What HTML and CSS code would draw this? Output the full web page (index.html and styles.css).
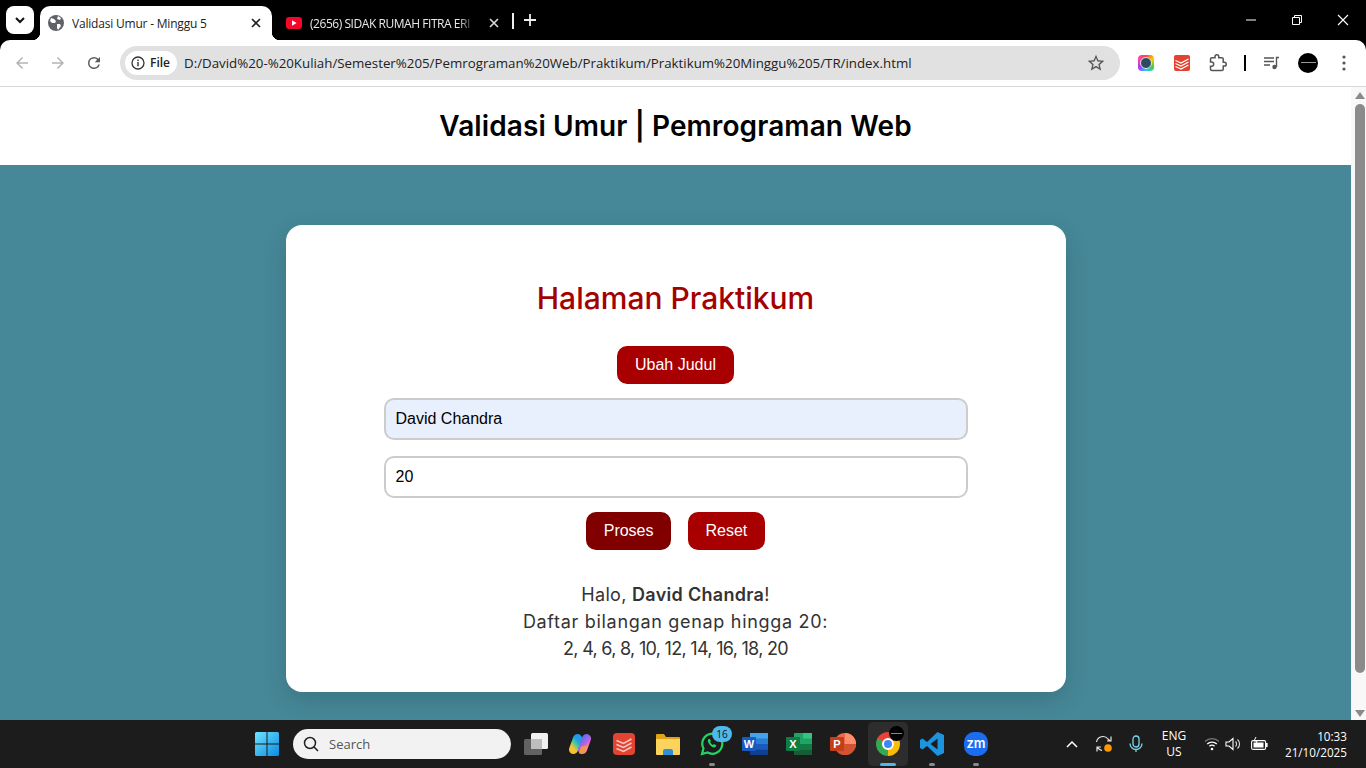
FILE: index.html
```html
<!DOCTYPE html>
<html>
<head>
    <title>Validasi Umur - Minggu 5</title>
    <link rel="stylesheet" href="styles.css">
</head>
<body>
    <div class="tabstrip">
        <div class="tab-search"><svg width="12" height="12" viewBox="0 0 12 12"><path d="M2 4l4 4 4-4" fill="none" stroke="#111" stroke-width="2"/></svg></div>
        <div class="tab tab-active">
            <svg class="favicon" width="16" height="16" viewBox="0 0 16 16"><circle cx="8" cy="8" r="8" fill="#5f6368"/><path d="M3 3l3 1 2 2-1 2-3 0-2-2zM9 9l3 0 1 2-3 4-1-2zM10 1l3 2-1 2-3-1z" fill="#fff"/></svg>
            <span class="tab-title">Validasi Umur - Minggu 5</span>
            <svg class="tab-close" width="10" height="10" viewBox="0 0 10 10"><path d="M1 1l8 8M9 1l-8 8" stroke="#222" stroke-width="1.6"/></svg>
        </div>
        <div class="tab tab-other">
            <svg class="favicon" width="16" height="12" viewBox="0 0 16 12"><rect width="16" height="12" rx="3" fill="#f5062a"/><path d="M6 3.2l4.6 2.8L6 8.800z" fill="#fff"/></svg>
            <span class="tab-title tab-fade">(2656) SIDAK RUMAH FITRA ERI</span>
            <svg class="tab-close" width="10" height="10" viewBox="0 0 10 10"><path d="M1 1l8 8M9 1l-8 8" stroke="#ddd" stroke-width="1.6"/></svg>
        </div>
        <div class="tab-sep"></div>
        <svg class="tab-new" width="12" height="12" viewBox="0 0 12 12"><path d="M6 0v12M0 6h12" stroke="#eee" stroke-width="1.8"/></svg>
        <div class="win-controls">
            <svg width="46" height="40" viewBox="0 0 46 40"><path d="M18 20h10" stroke="#fff"/></svg>
            <svg width="46" height="40" viewBox="0 0 46 40"><path d="M18.500 17.500h7v7h-7zM20.500 17v-1.500h7v7H26" fill="none" stroke="#fff"/></svg>
            <svg width="46" height="40" viewBox="0 0 46 40"><path d="M18 15l10 10M28 15L18 25" stroke="#fff" stroke-width="1.100"/></svg>
        </div>
    </div>

    <div class="toolbar">
        <svg class="nav-icon" width="18" height="18" viewBox="0 0 24 24"><path d="M20 11H7.800l5.600-5.600L12 4l-8 8 8 8 1.400-1.400L7.800 13H20z" fill="#b4b4b4"/></svg>
        <svg class="nav-icon" width="18" height="18" viewBox="0 0 24 24"><path d="M4 11h12.200l-5.600-5.600L12 4l8 8-8 8-1.400-1.400 5.600-5.600H4z" fill="#b4b4b4"/></svg>
        <svg class="nav-icon" width="18" height="18" viewBox="0 0 24 24"><path d="M17.650 6.350A7.950 7.950 0 0 0 12 4a8 8 0 1 0 7.750 10h-2.080A6 6 0 1 1 12 6c1.660 0 3.140.69 4.220 1.780L13 11h7V4z" fill="#5a5a5a"/></svg>
        <div class="omnibox">
            <div class="file-chip">
                <svg width="14" height="14" viewBox="0 0 14 14"><circle cx="7" cy="7" r="6" fill="none" stroke="#333" stroke-width="1.300"/><path d="M7 6v4.200M7 3.600v1.300" stroke="#333" stroke-width="1.400"/></svg>
                <span>File</span>
            </div>
            <span class="url">D:/David%20-%20Kuliah/Semester%205/Pemrograman%20Web/Praktikum/Praktikum%20Minggu%205/TR/index.html</span>
            <svg class="star" width="20" height="20" viewBox="0 0 24 24"><path d="M22 9.240l-7.190-.62L12 2 9.190 8.630 2 9.240l5.460 4.730L5.820 21 12 17.270 18.180 21l-1.630-7.030L22 9.240zM12 15.400l-3.760 2.270 1-4.280-3.320-2.880 4.380-.38L12 6.100l1.710 4.040 4.380.38-3.320 2.880 1 4.280L12 15.400z" fill="#555"/></svg>
        </div>
        <div class="ext-icons">
            <div class="ext"><div class="ext-lens"></div></div>
            <div class="ext"><svg width="16" height="16" viewBox="0 0 16 16"><rect width="16" height="16" rx="2" fill="#e44332"/><path d="M1.500 5.500l5.500 2.500 7.500-4M1.500 8.500l5.500 2.500 7.500-4M1.500 11.500l5.500 2.500 7.500-4" fill="none" stroke="#fff" stroke-width="1.200"/></svg></div>
            <div class="ext"><svg width="18" height="18" viewBox="0 0 24 24"><path d="M20.500 11H19V7c0-1.100-.9-2-2-2h-4V3.500C13 2.120 11.880 1 10.500 1S8 2.120 8 3.500V5H4c-1.100 0-1.990.9-1.990 2v3.800H3.500c1.490 0 2.700 1.210 2.700 2.700s-1.210 2.700-2.700 2.700H2V20c0 1.100.9 2 2 2h13c1.100 0 2-.9 2-2v-4h1.500c1.380 0 2.500-1.120 2.500-2.500S21.880 11 20.500 11z" fill="none" stroke="#555" stroke-width="2"/></svg></div>
            <div class="toolbar-sep"></div>
            <div class="ext"><svg width="16" height="14" viewBox="0 0 16 14"><path d="M0 2h10M0 5.500h10M0 9h6" stroke="#555" stroke-width="1.400"/><path d="M12.500 11V1.500H15" fill="none" stroke="#555" stroke-width="1.400"/><circle cx="10.500" cy="11" r="2.200" fill="#555"/></svg></div>
            <div class="ext"><div class="avatar"></div></div>
            <div class="ext"><svg width="4" height="16" viewBox="0 0 4 16"><circle cx="2" cy="2" r="1.600" fill="#555"/><circle cx="2" cy="8" r="1.600" fill="#555"/><circle cx="2" cy="14" r="1.600" fill="#555"/></svg></div>
        </div>
    </div>

    <div class="viewport">
        <div class="page">
            <header class="page-header">
                <h1>Validasi Umur | Pemrograman Web</h1>
            </header>
            <main class="page-main">
                <section class="card">
                    <h2>Halaman Praktikum</h2>
                    <button class="btn" type="button">Ubah Judul</button>
                    <input class="field field-filled" type="text" value="David Chandra">
                    <input class="field" type="text" value="20">
                    <div class="btn-row">
                        <button class="btn btn-hover" type="button">Proses</button>
                        <button class="btn" type="button">Reset</button>
                    </div>
                    <div class="result">
                        <div class="line-greet">Halo, <b>David Chandra</b>!</div>
                        <div class="line-label">Daftar bilangan genap hingga 20:</div>
                        <div class="line-nums">2, 4, 6, 8, 10, 12, 14, 16, 18, 20</div>
                    </div>
                </section>
            </main>
        </div>
        <div class="scrollbar">
            <svg width="10" height="7" viewBox="0 0 10 7"><path d="M5 0l5 7H0z" fill="#8a8a8a"/></svg>
            <div class="scroll-thumb"></div>
            <svg width="10" height="7" viewBox="0 0 10 7"><path d="M5 7l5-7H0z" fill="#8a8a8a"/></svg>
        </div>
    </div>

    <footer class="taskbar">
        <div class="task-item">
            <svg width="24" height="24" viewBox="0 0 24 24">
                <defs><linearGradient id="winblue" x1="0" y1="0" x2="1" y2="1"><stop offset="0" stop-color="#6fe3ff"/><stop offset="1" stop-color="#0a8be0"/></linearGradient></defs>
                <path d="M0 1.500a1.500 1.500 0 0 1 1.500-1.500H11.500v11.500H0zM12.500 0H22.500A1.500 1.500 0 0 1 24 1.500V11.500H12.500zM0 12.500H11.500V24H1.500A1.500 1.500 0 0 1 0 22.500zM12.500 12.500H24V22.500A1.500 1.500 0 0 1 22.500 24H12.500z" fill="url(#winblue)"/>
            </svg>
        </div>
        <div class="search-box">
            <svg width="16" height="16" viewBox="0 0 16 16"><circle cx="7" cy="7" r="5.500" fill="none" stroke="#222" stroke-width="1.500"/><path d="M11 11l4 4" stroke="#222" stroke-width="1.600"/></svg>
            <span>Search</span>
        </div>
        <div class="task-item">
            <svg width="24" height="24" viewBox="0 0 24 24"><rect x="7" y="1" width="17" height="16" rx="1.500" fill="#f0f0f0"/><rect x="0" y="7" width="18" height="16" rx="1.500" fill="#6a6a6a" fill-opacity=".9"/><rect x="7" y="7" width="11" height="10" fill="#bdbdbd"/></svg>
        </div>
        <div class="task-item">
            <svg width="24" height="24" viewBox="0 0 24 24">
                <defs>
                    <linearGradient id="copleft" x1="0.700" y1="0" x2="0.300" y2="1"><stop offset="0" stop-color="#1f9be8"/><stop offset=".55" stop-color="#4fd08a"/><stop offset="1" stop-color="#f6c233"/></linearGradient>
                    <linearGradient id="copright" x1="0.300" y1="0" x2="0.700" y2="1"><stop offset="0" stop-color="#6a6ff0"/><stop offset=".55" stop-color="#c45fe0"/><stop offset="1" stop-color="#f58ab0"/></linearGradient>
                </defs>
                <path d="M9.500 6.500L5.500 17.500" fill="none" stroke="url(#copleft)" stroke-width="9" stroke-linecap="round"/>
                <path d="M18.500 6.500L14.500 17.500" fill="none" stroke="url(#copright)" stroke-width="9" stroke-linecap="round"/>
                <path d="M11 21.500h3c2 0 3-1.500 3.500-3L19 14l-6 .5z" fill="#f59a3c"/>
            </svg>
        </div>
        <div class="task-item">
            <svg width="22" height="22" viewBox="0 0 22 22"><rect width="22" height="22" rx="4" fill="#e44332"/><path d="M3.500 7.500l7 3 8-4.500M3.500 11.500l7 3 8-4.500M3.500 15.500l7 3 8-4.500" fill="none" stroke="#f8c9c4" stroke-width="1.500"/></svg>
        </div>
        <div class="task-item">
            <svg width="24" height="22" viewBox="0 0 24 22"><path d="M0 2a1 1 0 0 1 1-1h7l2 3h13a1 1 0 0 1 1 1v3H0z" fill="#e0a317"/><path d="M0 6h24v15a1 1 0 0 1-1 1H1a1 1 0 0 1-1-1z" fill="#fcd45b"/><path d="M7 22v-4a2 2 0 0 1 2-2h6a2 2 0 0 1 2 2v4z" fill="#2d8fd8"/></svg>
        </div>
        <div class="task-item running">
            <svg width="24" height="24" viewBox="0 0 24 24"><path d="M2 22l1.500-5.500A10 10 0 1 1 7.500 20.500z" fill="none" stroke="#25d366" stroke-width="2.200"/><path d="M8.500 7c-1 1-1 3 1 5.500s4.500 3.500 6 2.500l1-1.500-2.500-1.500-1 1c-1-.3-2.500-2-3-3l1-1L9.800 7z" fill="#25d366"/></svg>
            <span class="badge">16</span>
        </div>
        <div class="task-item">
            <svg width="24" height="24" viewBox="0 0 24 24"><rect x="6" y="1" width="18" height="22" rx="1" fill="#2b7cd3"/><rect x="6" y="1" width="18" height="5.500" fill="#41a5ee"/><rect x="6" y="12" width="18" height="5.500" fill="#185abd"/><rect x="6" y="17.500" width="18" height="5.500" fill="#103f91"/></svg>
            <span class="app-letter letter-word">W</span>
        </div>
        <div class="task-item">
            <svg width="24" height="24" viewBox="0 0 24 24"><rect x="6" y="1" width="18" height="22" rx="1" fill="#21a366"/><rect x="15" y="1" width="9" height="5.500" fill="#33c481"/><rect x="6" y="12" width="18" height="5.500" fill="#107c41"/><rect x="6" y="17.500" width="18" height="5.500" fill="#185c37"/></svg>
            <span class="app-letter letter-excel">X</span>
        </div>
        <div class="task-item">
            <svg width="24" height="24" viewBox="0 0 24 24"><circle cx="13" cy="12" r="11" fill="#ed6c47"/><path d="M13 1a11 11 0 0 1 11 11H13z" fill="#ff8f6b"/><path d="M2 12a11 11 0 0 0 22 0z" fill="#d35230"/></svg>
            <span class="app-letter letter-ppt">P</span>
        </div>
        <div class="task-item task-active">
            <div class="chrome-logo"><div class="chrome-eye"></div></div>
            <div class="chrome-avatar"></div>
            <div class="active-bar"></div>
        </div>
        <div class="task-item running">
            <svg width="24" height="24" viewBox="0 0 24 24"><path d="M17.500 0L24 3v18l-6.500 3L7 14l-4.500 3.500L0 16V8l2.500-1.500L7 10zM17.500 6.500L10.500 12l7 5.500z" fill="#1d94e0" fill-rule="evenodd"/></svg>
        </div>
        <div class="task-item running">
            <div class="zoom-logo">zm</div>
        </div>

        <div class="tray">
            <div class="tray-icon"><svg width="12" height="8" viewBox="0 0 12 8"><path d="M1 7l5-5 5 5" fill="none" stroke="#fff" stroke-width="1.500"/></svg></div>
            <div class="tray-icon"><svg width="18" height="18" viewBox="0 0 18 18"><path d="M1.500 7A6.500 6.500 0 0 1 13 4l2 2M16 1.500V6h-4M2 12l2 2a6 6 0 0 0 3 1.500M2 16.500V12h4" fill="none" stroke="#e8e8e8" stroke-width="1.200"/><circle cx="13" cy="13" r="3.800" fill="#ff9800"/></svg></div>
            <div class="tray-icon"><svg width="14" height="18" viewBox="0 0 14 18"><rect x="4" y="1" width="6" height="11" rx="3" fill="none" stroke="#7fd4ea" stroke-width="1.300"/><path d="M1 8.500a6 6 0 0 0 12 0M7 14.500V17" fill="none" stroke="#7fd4ea" stroke-width="1.300"/></svg></div>
            <div class="tray-lang">ENG<br>US</div>
            <div class="tray-status">
                <svg width="16" height="14" viewBox="0 0 16 14"><path d="M1 4.500a10 10 0 0 1 14 0" fill="none" stroke="#777" stroke-width="1.200"/><path d="M3.200 7a7 7 0 0 1 9.600 0M5.400 9.300a3.800 3.800 0 0 1 5.200 0" fill="none" stroke="#fff" stroke-width="1.300"/><circle cx="8" cy="12" r="1.300" fill="#fff"/></svg>
                <svg width="17" height="14" viewBox="0 0 17 14"><path d="M1 5h3l4-3.500v11L4 9H1z" fill="none" stroke="#fff" stroke-width="1.100"/><path d="M10.500 4.500a3.500 3.500 0 0 1 0 5M12.500 2.500a6 6 0 0 1 0 9" fill="none" stroke="#ddd" stroke-width="1.100"/></svg>
                <svg class="battery" width="17" height="14" viewBox="0 0 17 14"><rect x=".6" y="3.600" width="14" height="8.800" rx="1.500" fill="none" stroke="#fff" stroke-width="1.100"/><rect x="2.500" y="5.500" width="10" height="5" fill="#fff"/><rect x="15" y="6" width="1.600" height="4" fill="#fff"/><path d="M5 0L3 4h3L5 7" fill="none" stroke="#fff"/></svg>
            </div>
            <div class="tray-clock">10:33<br>21/10/2025</div>
        </div>
    </footer>
</body>
</html>
```

FILE: styles.css
```css
* {
    box-sizing: border-box;
}

html, body {
    margin: 0;
    padding: 0;
    height: 768px;
    overflow: hidden;
}

body {
    display: flex;
    flex-direction: column;
    background-color: #000;
    font-family: "Open Sans", sans-serif;
}

/* tab strip */
.tabstrip {
    height: 40px;
    display: flex;
    align-items: flex-end;
    background-color: #000;
    flex-shrink: 0;
}

.tab-search {
    width: 28px;
    height: 28px;
    margin: 0 6px 6px 6px;
    border-radius: 8px;
    background-color: #fff;
    display: flex;
    align-items: center;
    justify-content: center;
}

.tab {
    height: 34px;
    display: flex;
    align-items: center;
    font-size: 12px;
    position: relative;
    white-space: nowrap;
}

.tab-active {
    width: 232px;
    padding: 0 11px 0 8px;
    background-color: #fff;
    border-radius: 10px 10px 0 0;
    color: #222;
}

.tab-active::before,
.tab-active::after {
    content: "";
    position: absolute;
    bottom: 0;
    width: 8px;
    height: 8px;
}

.tab-active::before {
    left: -8px;
    background: radial-gradient(circle at 0 0, #000 8px, #fff 8.500px);
}

.tab-active::after {
    right: -8px;
    background: radial-gradient(circle at 100% 0, #000 8px, #fff 8.500px);
}

.tab-other {
    width: 240px;
    padding: 0 13px 0 14px;
    color: #e8e8e8;
}

.favicon {
    flex-shrink: 0;
}

.tab-title {
    flex: 1;
    margin-left: 8px;
    overflow: hidden;
    letter-spacing: -0.2px;
}

.tab-other .tab-title {
    margin-right: 14px;
    letter-spacing: -0.45px;
}

.tab-fade {
    -webkit-mask-image: linear-gradient(to right, #000 90%, transparent 100%);
    mask-image: linear-gradient(to right, #000 90%, transparent 100%);
}

.tab-close {
    flex-shrink: 0;
}

.tab-sep {
    width: 2px;
    height: 16px;
    margin: 0 0 11px 0;
    background-color: #eee;
}

.tab-new {
    margin: 0 0 14px 10px;
}

.win-controls {
    margin-left: auto;
    height: 40px;
    display: flex;
}

/* toolbar */
.toolbar {
    height: 47px;
    flex-shrink: 0;
    display: flex;
    align-items: center;
    padding: 0 0 1px 0;
    background-color: #fff;
    border-bottom: 1px solid #d8d8d8;
    border-radius: 10px 10px 0 0;
}

.nav-icon {
    margin-left: 14px;
    margin-right: 4px;
    width: 18px;
}

.nav-icon:first-child {
    margin-left: 13px;
}

.omnibox {
    width: 1000px;
    height: 34px;
    margin-left: 13px;
    padding: 0 14px 0 5px;
    border-radius: 17px;
    background-color: #e1e1e1;
    display: flex;
    align-items: center;
    color: #222;
}

.file-chip {
    width: 52px;
    height: 24px;
    padding-left: 6px;
    display: flex;
    align-items: center;
    gap: 5px;
    border-radius: 12px;
    background-color: #fff;
    font-size: 12px;
    font-weight: 600;
}

.url {
    margin-left: 7px;
    font-size: 13.300px;
    white-space: nowrap;
}

.star {
    margin-left: auto;
}

.ext-icons {
    flex: 1;
    display: flex;
    align-items: center;
    padding-left: 8px;
}

.ext {
    width: 36px;
    height: 28px;
    display: flex;
    align-items: center;
    justify-content: center;
}

.ext-lens {
    width: 16px;
    height: 16px;
    border-radius: 4px;
    background: conic-gradient(#f44, #fc0, #4c4, #2cf, #a3f, #f4a, #f44);
    display: flex;
    align-items: center;
    justify-content: center;
}

.ext-lens::after {
    content: "";
    width: 10px;
    height: 10px;
    border-radius: 50%;
    background-color: #2f4a5f;
    border: 1.500px solid #dfe6ea;
}

.toolbar-sep {
    width: 2px;
    height: 16px;
    margin: 0 8px;
    background-color: #000;
}

.avatar {
    width: 20px;
    height: 20px;
    border-radius: 50%;
    background: linear-gradient(#999, #999) center / 15px 1px no-repeat, #000;
}

/* page */
.viewport {
    height: 633px;
    flex-shrink: 0;
    display: flex;
    background-color: #fff;
}

.page {
    flex: 1;
    display: flex;
    flex-direction: column;
}

.page-header {
    height: 78px;
    display: flex;
    align-items: center;
    justify-content: center;
    background-color: #fff;
}

h1 {
    margin: 0;
    font-family: Inter, sans-serif;
    font-size: 28px;
    font-weight: 600;
    letter-spacing: 0.1px;
    color: #000;
}

.page-main {
    flex: 1;
    padding-top: 60px;
    background-color: #468898;
}

.card {
    width: 780px;
    height: 467px;
    margin: 0 auto;
    padding-top: 54px;
    display: flex;
    flex-direction: column;
    align-items: center;
    background-color: #fff;
    border-radius: 16px;
    box-shadow: 0 8px 24px rgba(0, 0, 0, 0.15);
}

h2 {
    margin: 0 0 29px 0;
    height: 38px;
    line-height: 38px;
    font-family: Inter, sans-serif;
    font-size: 30px;
    font-weight: 500;
    color: #a50000;
}

.btn {
    height: 38px;
    padding: 0 18px;
    border: none;
    border-radius: 10px;
    background-color: #a80000;
    color: #fff;
    font-family: "Liberation Sans", Arial, sans-serif;
    font-size: 16px;
}

.btn-row .btn {
    padding: 0 17.500px;
}

.btn-hover {
    background-color: #800000;
}

.btn-row {
    display: flex;
    gap: 17px;
}

.field {
    width: 584px;
    height: 42px;
    margin-top: 14px;
    padding: 0 10px;
    border: 2px solid #ccc;
    border-radius: 10px;
    background-color: #fff;
    color: #000;
    font-family: "Liberation Sans", Arial, sans-serif;
    font-size: 16px;
}

.field + .field {
    margin-top: 16px;
    margin-bottom: 14px;
}

.field-filled {
    background-color: #e8f0fe;
}

.result {
    margin-top: 31px;
    font-family: Inter, sans-serif;
    font-size: 18px;
    line-height: 27px;
    text-align: center;
    color: #333;
}

.result b {
    font-weight: 600;
}

.line-greet {
    letter-spacing: 0.3px;
}

.line-label {
    letter-spacing: 0.69px;
}

.line-nums {
    letter-spacing: -0.7px;
}

.scrollbar {
    width: 15px;
    padding: 5px 0 3px 2px;
    display: flex;
    flex-direction: column;
    align-items: center;
    gap: 5px;
    background-color: #f8f8f8;
}

.scroll-thumb {
    width: 10px;
    height: 569px;
    border-radius: 5px;
    background-color: #8b8b8b;
    margin-bottom: auto;
}

/* taskbar */
.taskbar {
    height: 48px;
    flex-shrink: 0;
    display: flex;
    align-items: center;
    padding-left: 245px;
    background-color: #1c1c1c;
}

.task-item {
    width: 44px;
    height: 44px;
    flex-shrink: 0;
    display: flex;
    align-items: center;
    justify-content: center;
    position: relative;
}

.running::after {
    content: "";
    position: absolute;
    left: 19px;
    bottom: 0;
    width: 6px;
    height: 3px;
    border-radius: 2px;
    background-color: #8a8a8a;
}

.search-box {
    width: 218px;
    height: 30px;
    margin: 0 3px 0 4px;
    padding-left: 10px;
    display: flex;
    align-items: center;
    gap: 10px;
    border-radius: 15px;
    background-color: #f2f2f2;
    color: #555;
    font-size: 13px;
    flex-shrink: 0;
}

.badge {
    position: absolute;
    top: 4px;
    right: 2px;
    width: 20px;
    height: 16px;
    border-radius: 8px;
    background-color: #4fb8ec;
    color: #111;
    font-size: 10px;
    line-height: 16px;
    text-align: center;
}

.app-letter {
    position: absolute;
    left: 8px;
    top: 15px;
    width: 14px;
    height: 14px;
    border-radius: 1px;
    color: #fff;
    font-family: "Liberation Sans", Arial, sans-serif;
    font-size: 11px;
    font-weight: 700;
    line-height: 14px;
    text-align: center;
}

.letter-word {
    background-color: #185abd;
}

.letter-excel {
    background-color: #107c41;
}

.letter-ppt {
    background-color: #c43e1c;
}

.task-active {
    width: 40px;
    margin: 0 2px;
    border-radius: 5px;
    background-color: #2d2d2d;
}

.chrome-logo {
    width: 24px;
    height: 24px;
    border-radius: 50%;
    background: conic-gradient(#ea4335 0 60deg, #fbbc04 60deg 180deg, #34a853 180deg 300deg, #ea4335 300deg);
    display: flex;
    align-items: center;
    justify-content: center;
}

.chrome-eye {
    width: 12px;
    height: 12px;
    border-radius: 50%;
    border: 2px solid #fff;
    background-color: #4285f4;
}

.chrome-avatar {
    position: absolute;
    top: 4px;
    right: 4px;
    width: 15px;
    height: 15px;
    border-radius: 50%;
    background: linear-gradient(#888, #888) center / 11px 1px no-repeat, #000;
}

.active-bar {
    position: absolute;
    left: 12px;
    bottom: 0;
    width: 16px;
    height: 3px;
    border-radius: 2px;
    background-color: #4fb8ec;
}

.zoom-logo {
    width: 24px;
    height: 24px;
    border-radius: 10px;
    background-color: #1a6cf0;
    color: #fff;
    font-family: Inter, sans-serif;
    font-size: 13px;
    font-weight: 600;
    line-height: 22px;
    text-align: center;
}

.tray {
    margin-left: 58px;
    display: flex;
    align-items: center;
    color: #fff;
}

.tray-icon {
    width: 32px;
    display: flex;
    justify-content: center;
}

.tray-lang {
    width: 44px;
    font-size: 12px;
    line-height: 16px;
    text-align: center;
}

.tray-status {
    width: 72px;
    padding-left: 8px;
    display: flex;
    align-items: center;
    gap: 5px;
}

.battery {
    margin-left: 4px;
}

.tray-clock {
    width: 79px;
    font-size: 11.700px;
    line-height: 16px;
    text-align: right;
}
```
